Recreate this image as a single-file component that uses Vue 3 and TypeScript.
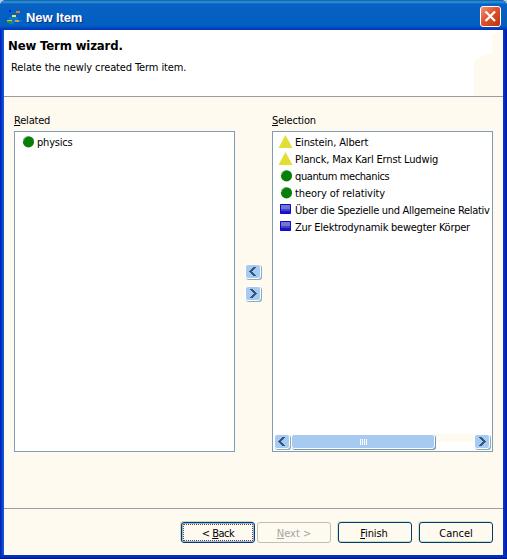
<script setup lang="ts">
type Kind = 'person' | 'term' | 'work'
interface Item { text: string; kind: Kind; spacing: number }
const related: Item[] = [{ text: 'physics', kind: 'term', spacing: -0.2 }]
const selection: Item[] = [
  { text: 'Einstein, Albert', kind: 'person', spacing: -0.15 },
  { text: 'Planck, Max Karl Ernst Ludwig', kind: 'person', spacing: -0.17 },
  { text: 'quantum mechanics', kind: 'term', spacing: -0.39 },
  { text: 'theory of relativity', kind: 'term', spacing: -0.08 },
  { text: 'Über die Spezielle und Allgemeine Relativ', kind: 'work', spacing: -0.3 },
  { text: 'Zur Elektrodynamik bewegter Körper', kind: 'work', spacing: -0.24 },
]
const lists = [
  { name: 'related', key: 'R', rest: 'elated', items: related },
  { name: 'selection', key: 'S', rest: 'election', items: selection },
]
const left = 'M11 3h-3v1h-1v1h-1v1h-1v1h-1v1h1v1h1v1h1v1h1v1h3v-1h-1v-1h-1v-1h-1v-1h-1v-1h1v-1h1v-1h1v-1h1z'
const right = 'M5 3h3v1h1v1h1v1h1v1h1v1h-1v1h-1v1h-1v1h-1v1h-3v-1h1v-1h1v-1h1v-1h1v-1h-1v-1h-1v-1h-1v-1h-1z'
</script>

<template>
  <div class="window">
    <header class="titlebar">
      <svg class="app-icon" width="16" height="16" viewBox="0 0 16 16" shape-rendering="crispEdges">
        <path d="M3 9h9v3h4v2H8v2H3z" fill="#0878d0" />
        <path d="M3 2h2v2H3z" fill="#0018e8" />
        <path d="M10 3h4v2h-4z" fill="#e87830" />
        <path d="M6 7h4v2H6z" fill="#f8ec28" />
        <path d="M1 12h5v3H1z" fill="#409028" />
        <path d="M1 12h5v1H1z" fill="#b0d840" />
        <path d="M9 12h4v2H9z" fill="#f09038" />
      </svg>
      <span class="title">New Item</span>
      <button class="close" aria-label="Close">
        <svg width="19" height="19" viewBox="0 0 19 19"><path d="M4.5 4.5L14 14M14 4.5L4.5 14" stroke="#fff" stroke-width="2.3" /></svg>
      </button>
    </header>
    <section class="banner">
      <h1>New Term wizard.</h1>
      <p>Relate the newly created Term item.</p>
      <svg class="banner-art" width="29" height="66" viewBox="0 0 29 66"><path d="M29 1Q22 2 18 5V23Q9 25 0 31V66H29z" fill="#fffaf0" /></svg>
    </section>
    <main class="content">
      <template v-for="(list, n) in lists" :key="list.name">
        <div v-if="n === 1" class="transfer">
          <button v-for="d in [left, right]" :key="d" class="mini">
            <svg width="16" height="15" viewBox="0 0 16 15" shape-rendering="crispEdges"><path :d="d" fill="#31587d" /></svg>
          </button>
        </div>
        <div class="column">
          <label><u>{{ list.key }}</u>{{ list.rest }}</label>
          <div class="listbox">
            <ul>
              <li v-for="item in list.items" :key="item.text">
                <svg class="glyph" width="15" height="15" viewBox="0 0 15 15">
                  <path v-if="item.kind === 'person'" d="M7.5 0L14.5 13H.5z" fill="#e1df35" />
                  <template v-else-if="item.kind === 'term'">
                    <circle cx="8.5" cy="6.8" r="5.6" fill="#087f08" />
                    <path d="M3.2 6.3Q3.5 2.3 7.5 1.3" fill="none" stroke="#8abd86" />
                  </template>
                  <template v-else>
                    <path d="M2.5 1.5h10v9h-10z" fill="#1717ce" stroke="#0808d8" />
                    <path d="M3 2h9v4H3z" fill="#7575cc" />
                    <path d="M3 6h9v2H3z" fill="#4545b9" />
                  </template>
                </svg>
                <span :style="{ letterSpacing: item.spacing + 'px' }">{{ item.text }}</span>
              </li>
            </ul>
            <div v-if="n === 1" class="scrollbar">
              <button class="mini"><svg width="16" height="15" viewBox="0 0 16 15" shape-rendering="crispEdges"><path :d="left" fill="#31587d" /></svg></button>
              <div class="thumb"><i v-for="k in 4" :key="k" /></div>
              <div class="track" />
              <button class="mini"><svg width="16" height="15" viewBox="0 0 16 15" shape-rendering="crispEdges"><path :d="right" fill="#31587d" /></svg></button>
            </div>
          </div>
        </div>
      </template>
    </main>
    <footer class="actions">
      <button class="action back"><span>&lt; <u>B</u>ack</span></button>
      <button class="action next" disabled><span><u>N</u>ext &gt;</span></button>
      <button class="action finish"><span><u>F</u>inish</span></button>
      <button class="action cancel"><span>Cancel</span></button>
    </footer>
  </div>
</template>

<style>
body { margin: 0; background: #b5cae8; overflow: hidden; }
</style>
<style scoped>
* { box-sizing: border-box; }
.window { width: 507px; height: 559px; display: flex; flex-direction: column; border-radius: 6px 6px 0 0; background: linear-gradient(#0031bd, #0031bd 2px, #001070) bottom / 100% 4px no-repeat, linear-gradient(90deg, #0019b9, #0a3fd0 2px, #1263c8 4px, #0838cc calc(100% - 4px), #0019a8); padding: 0 4px 4px; overflow: hidden; font: 11px "DejaVu Sans Condensed", "DejaVu Sans", sans-serif; font-stretch: condensed; color: #000; }
button { font: inherit; padding: 0; }
u { text-decoration-thickness: 1px; text-underline-offset: 1px; }
.titlebar { height: 30px; flex: none; margin: 0 -4px; padding: 3px 6px 0; display: flex; align-items: center; background: linear-gradient(#1452b6, #2c9cce 2px, #0861c4 4px, #005fc0 26px, #0038bd 29px); }
.app-icon { margin-top: -1px; }
.title { margin: 2px 0 0 4px; color: #fff; font: bold 13px/24px "Liberation Sans", sans-serif; text-shadow: 1px 1px #082f80; letter-spacing: -.1px; }
.close { width: 21px; height: 21px; margin-left: auto; border: 1px solid #fff; border-radius: 3px; background: linear-gradient(135deg, #ed9477, #e0512b 45%, #b9330d); }
.close svg { display: block; }
.banner { position: relative; height: 67px; flex: none; background: #fff; border-bottom: 1px solid #9d9da1; }
h1 { margin: 0; padding: 7px 0 0 4px; font-size: 13px; line-height: 17px; letter-spacing: -.13px; }
p { margin: 7px 0 0 7px; line-height: 14px; white-space: nowrap; letter-spacing: -.11px; }
.banner-art { position: absolute; right: 0; bottom: 0; }
.content { height: 412px; flex: none; display: flex; padding: 16px 10px 0; background: #fffaf0; border-bottom: 1px solid #9d9da1; }
.column { width: 221px; }
label { display: block; height: 18px; line-height: 16px; letter-spacing: -.2px; }
.listbox { height: 321px; border: 1px solid #7f9db9; background: #fff; display: flex; flex-direction: column; justify-content: space-between; padding: 2px 1px 1px; }
ul { list-style: none; margin: 0; padding: 0 0 0 4px; }
li { height: 17px; display: flex; align-items: center; white-space: nowrap; line-height: 16px; }
.glyph { flex: none; margin-right: 2px; }
.transfer { width: 37px; padding: 151px 0 0 10px; display: flex; flex-direction: column; gap: 7px; }
.mini { width: 16px; height: 15px; flex: none; border: 1px solid #fff; border-radius: 3px; background: #a6caf0; box-shadow: 1px 1px #85aeb8; }
.mini svg { display: block; margin: -1px; }
.transfer .mini svg { margin-top: -2px; }
.scrollbar { height: 16px; display: flex; }
.thumb { width: 144px; height: 15px; margin-left: 1px; border: 1px solid #fff; border-radius: 3px; background: #a6caf0; box-shadow: 1px 1px #7396ad; display: flex; justify-content: center; align-items: center; gap: 1px; }
.thumb i { width: 1px; height: 6px; background: #fff; }
.track { flex: 1; height: 8px; margin-left: 1px; background: #fffaf0; }
.scrollbar .mini:last-child { margin-right: 1px; }
.actions { flex: 1; padding: 13px 10px 0 177px; display: flex; background: #fffaf0; }
.action { width: 74px; height: 21px; border: 1px solid #003c74; border-radius: 3px; background: #fffaf0; box-shadow: inset 0 -1px #c8dfbc, -1px -1px #d4e5ce; color: #000; line-height: 17px; padding-top: 1px; }
.back { box-shadow: inset 0 0 0 1px #99b5e7, -1px -1px #c8dfbc; padding: 0; letter-spacing: -.5px; }
.back span { display: block; height: 17px; margin: 1px; border: 1px dotted #783f35; line-height: 17px; }
.next { margin-left: 2px; border-color: #bebebe; color: #a5a5a0; box-shadow: none; }
.finish, .cancel { margin-left: 7px; }
.finish { letter-spacing: -.1px; padding-right: 2px; }
</style>
